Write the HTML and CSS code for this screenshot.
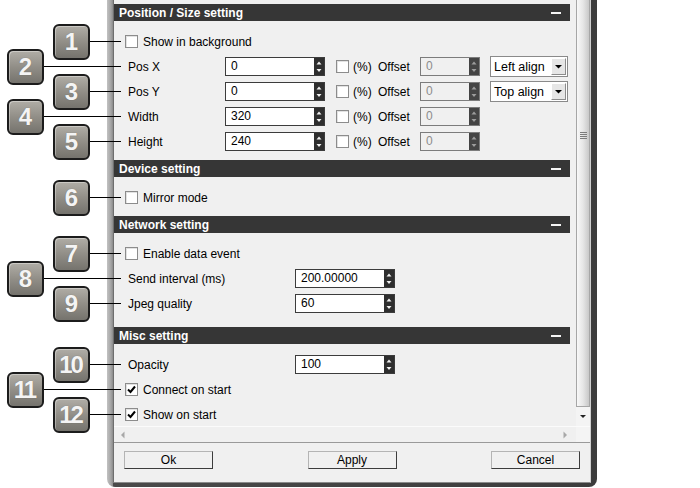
FILE: index.html
```html
<!DOCTYPE html>
<html lang="en">
<head>
  <meta charset="UTF-8">
  <title>Settings</title>
  <link rel="stylesheet" href="styles.css">
</head>
<body>

<div class="window">
  <div class="client">
    <div class="pane">
      <div class="content">

        <div class="section">
          <div class="section-head"><span>Position / Size setting</span><i class="collapse"></i></div>
          <div class="section-body">
            <div class="row">
              <div class="callout near"><b class="badge">1</b><i class="lead"></i></div>
              <span class="box"></span><span class="check-text">Show in background</span>
            </div>
            <div class="row">
              <div class="callout far"><b class="badge">2</b><i class="lead"></i></div>
              <span class="label">Pos X</span>
              <div class="spin"><span class="field">0</span><span class="arrows"><svg width="10" height="17"><path d="M2.5 6.5 L5 3.5 L7.5 6.5 Z M2.5 11 L7.5 11 L5 14 Z"/></svg></span></div>
              <span class="box pct-box"></span><span class="pct">(%)</span><span class="offset-label">Offset</span>
              <div class="spin off"><span class="field">0</span><span class="arrows"><svg width="10" height="17"><path d="M2.5 6.5 L5 3.5 L7.5 6.5 Z M2.5 11 L7.5 11 L5 14 Z"/></svg></span></div>
              <div class="combo"><span class="combo-text">Left align</span><span class="combo-btn"><svg width="13" height="15"><path d="M3 6 L10 6 L6.5 9.5 Z"/></svg></span></div>
            </div>
            <div class="row">
              <div class="callout near"><b class="badge">3</b><i class="lead"></i></div>
              <span class="label">Pos Y</span>
              <div class="spin"><span class="field">0</span><span class="arrows"><svg width="10" height="17"><path d="M2.5 6.5 L5 3.5 L7.5 6.5 Z M2.5 11 L7.5 11 L5 14 Z"/></svg></span></div>
              <span class="box pct-box"></span><span class="pct">(%)</span><span class="offset-label">Offset</span>
              <div class="spin off"><span class="field">0</span><span class="arrows"><svg width="10" height="17"><path d="M2.5 6.5 L5 3.5 L7.5 6.5 Z M2.5 11 L7.5 11 L5 14 Z"/></svg></span></div>
              <div class="combo"><span class="combo-text">Top align</span><span class="combo-btn"><svg width="13" height="15"><path d="M3 6 L10 6 L6.5 9.5 Z"/></svg></span></div>
            </div>
            <div class="row">
              <div class="callout far"><b class="badge">4</b><i class="lead"></i></div>
              <span class="label">Width</span>
              <div class="spin"><span class="field">320</span><span class="arrows"><svg width="10" height="17"><path d="M2.5 6.5 L5 3.5 L7.5 6.5 Z M2.5 11 L7.5 11 L5 14 Z"/></svg></span></div>
              <span class="box pct-box"></span><span class="pct">(%)</span><span class="offset-label">Offset</span>
              <div class="spin off"><span class="field">0</span><span class="arrows"><svg width="10" height="17"><path d="M2.5 6.5 L5 3.5 L7.5 6.5 Z M2.5 11 L7.5 11 L5 14 Z"/></svg></span></div>
            </div>
            <div class="row">
              <div class="callout near"><b class="badge">5</b><i class="lead"></i></div>
              <span class="label">Height</span>
              <div class="spin"><span class="field">240</span><span class="arrows"><svg width="10" height="17"><path d="M2.5 6.5 L5 3.5 L7.5 6.5 Z M2.5 11 L7.5 11 L5 14 Z"/></svg></span></div>
              <span class="box pct-box"></span><span class="pct">(%)</span><span class="offset-label">Offset</span>
              <div class="spin off"><span class="field">0</span><span class="arrows"><svg width="10" height="17"><path d="M2.5 6.5 L5 3.5 L7.5 6.5 Z M2.5 11 L7.5 11 L5 14 Z"/></svg></span></div>
            </div>
          </div>
        </div>

        <div class="section">
          <div class="section-head"><span>Device setting</span><i class="collapse"></i></div>
          <div class="section-body">
            <div class="row">
              <div class="callout near"><b class="badge">6</b><i class="lead"></i></div>
              <span class="box"></span><span class="check-text">Mirror mode</span>
            </div>
          </div>
        </div>

        <div class="section">
          <div class="section-head"><span>Network setting</span><i class="collapse"></i></div>
          <div class="section-body network">
            <div class="row">
              <div class="callout near"><b class="badge">7</b><i class="lead"></i></div>
              <span class="box"></span><span class="check-text">Enable data event</span>
            </div>
            <div class="row">
              <div class="callout far"><b class="badge">8</b><i class="lead"></i></div>
              <span class="label wide">Send interval (ms)</span>
              <div class="spin"><span class="field">200.00000</span><span class="arrows"><svg width="10" height="17"><path d="M2.5 6.5 L5 3.5 L7.5 6.5 Z M2.5 11 L7.5 11 L5 14 Z"/></svg></span></div>
            </div>
            <div class="row">
              <div class="callout near"><b class="badge">9</b><i class="lead"></i></div>
              <span class="label wide">Jpeg quality</span>
              <div class="spin"><span class="field">60</span><span class="arrows"><svg width="10" height="17"><path d="M2.5 6.5 L5 3.5 L7.5 6.5 Z M2.5 11 L7.5 11 L5 14 Z"/></svg></span></div>
            </div>
          </div>
        </div>

        <div class="section">
          <div class="section-head"><span>Misc setting</span><i class="collapse"></i></div>
          <div class="section-body last">
            <div class="row">
              <div class="callout near"><b class="badge two">10</b><i class="lead"></i></div>
              <span class="label wide">Opacity</span>
              <div class="spin"><span class="field">100</span><span class="arrows"><svg width="10" height="17"><path d="M2.5 6.5 L5 3.5 L7.5 6.5 Z M2.5 11 L7.5 11 L5 14 Z"/></svg></span></div>
            </div>
            <div class="row">
              <div class="callout far"><b class="badge two">11</b><i class="lead"></i></div>
              <span class="box"><svg width="11" height="11"><path d="M2 5.5 L4.5 8 L9 2.5"/></svg></span><span class="check-text">Connect on start</span>
            </div>
            <div class="row">
              <div class="callout near"><b class="badge two">12</b><i class="lead"></i></div>
              <span class="box"><svg width="11" height="11"><path d="M2 5.5 L4.5 8 L9 2.5"/></svg></span><span class="check-text">Show on start</span>
            </div>
          </div>
        </div>

      </div>

      <div class="vscroll">
        <div class="thumb">
          <svg class="grip" width="7" height="8"><path d="M0 0.5 H7 M0 2.5 H7 M0 4.5 H7 M0 6.5 H7"/></svg>
        </div>
        <div class="down-arrow"><svg width="14" height="18"><path d="M4 8 L10 8 L7 11 Z"/></svg></div>
      </div>
    </div>

    <div class="hscroll">
      <div class="htrack">
        <svg width="6" height="8"><path d="M4.5 0.5 L4.5 7.5 L1 4 Z"/></svg>
        <svg width="6" height="8"><path d="M1.5 0.5 L1.5 7.5 L5 4 Z"/></svg>
      </div>
      <div class="corner"></div>
    </div>

    <div class="buttons">
      <button class="btn">Ok</button>
      <button class="btn">Apply</button>
      <button class="btn">Cancel</button>
    </div>
  </div>
</div>

</body>
</html>
```

FILE: styles.css
```css
body {
  margin: 0;
  width: 700px;
  height: 488px;
  overflow: hidden;
  background: #fff;
  font-family: "Liberation Sans", Arial, sans-serif;
  font-size: 12px;
  color: #000;
}

/* window frame */
.window {
  margin-left: 107px;
  width: 490px;
  box-sizing: border-box;
  padding: 0 6px 4px 6px;
  border-radius: 0 0 8px 8px;
  background: linear-gradient(to right, #c2c2c2 0, #a4a4a4 4px, #8a8a8a 6px, #4a4a4a 6px, #3c3c3c 100%);
}
.client {
  background: #f0f0f0;
  border-left: 1px solid #6e6e6e;
  border-right: 1px solid #cfcfcf;
  border-bottom: 1px solid #8a8a8a;
}
.pane {
  display: flex;
  height: 426px;
}
.content {
  flex: 1;
  padding-top: 4px;
}

/* sections */
.section-head {
  height: 17px;
  margin-right: 6px;
  padding-left: 5px;
  background: #363636;
  color: #fff;
  font-weight: bold;
  display: flex;
  align-items: center;
  justify-content: space-between;
}
.collapse {
  width: 10px;
  height: 2px;
  background: #f4f4f4;
  margin-right: 9px;
}
.section-body {
  padding: 8px 0 6px;
}
.section-body.network {
  padding-bottom: 11px;
}
.section-body.last {
  padding-bottom: 0;
}

.row {
  position: relative;
  height: 25px;
  padding-left: 11px;
  display: flex;
  align-items: center;
}
.label {
  width: 97px;
  margin-left: 3px;
}
.label.wide {
  width: 167px;
}
.check-text {
  margin-left: 5px;
}

/* checkbox */
.box {
  width: 13px;
  height: 13px;
  box-sizing: border-box;
  border: 1px solid #8c8c8c;
  background: #fff;
  box-shadow: inset 1px 1px 0 #e2e2e2;
  display: flex;
  align-items: center;
  justify-content: center;
}
.box path {
  fill: none;
  stroke: #000;
  stroke-width: 2;
}
.pct-box {
  margin-left: 11px;
}
.pct {
  margin-left: 4px;
  width: 25px;
}
.offset-label {
  width: 42px;
}

/* spin boxes */
.spin {
  display: flex;
  width: 100px;
  height: 19px;
  box-sizing: border-box;
  border: 1px solid #3c3c3c;
  background: #fff;
}
.spin .field {
  flex: 1;
  padding-left: 5px;
  line-height: 17px;
}
.spin .arrows {
  width: 10px;
  background: #2e2e2e;
}
.spin .arrows svg {
  display: block;
}
.spin .arrows path {
  fill: #f2f2f2;
}
.spin.off {
  width: 60px;
  border-color: #7c7c7c;
  background: #f0f0f0;
  color: #8c8c8c;
}
.spin.off .arrows {
  background: #444;
}
.spin.off .arrows path {
  fill: #9c9c9c;
}

/* dropdown */
.combo {
  margin-left: 10px;
  width: 78px;
  height: 21px;
  box-sizing: border-box;
  border: 1px solid #8a8a8a;
  background: #fff;
  display: flex;
  align-items: center;
  justify-content: space-between;
}
.combo-text {
  padding-left: 3px;
  font-size: 12.5px;
}
.combo-btn {
  width: 15px;
  height: 17px;
  margin-right: 1px;
  box-sizing: border-box;
  border: 1px solid;
  border-color: #fff #8c8c8c #8c8c8c #fff;
  background: #e6e6e6;
}
.combo-btn svg {
  display: block;
}
.combo-btn path {
  fill: #000;
}

/* numbered callouts */
.callout {
  position: absolute;
  top: 50%;
  transform: translateY(-50%);
  display: flex;
  align-items: center;
}
.callout.near {
  left: -61px;
}
.callout.far {
  left: -107px;
}
.badge {
  width: 37px;
  height: 36px;
  box-sizing: border-box;
  border: 2px solid #1c1c1c;
  border-radius: 6px;
  background: linear-gradient(#b0ada6, #918e87 50%, #75736d);
  box-shadow: inset 1px 1px 0 rgba(255, 255, 255, 0.35);
  color: #f4f4f4;
  font-size: 24px;
  font-weight: bold;
  display: flex;
  align-items: center;
  justify-content: center;
  text-shadow: 0 0 1px rgba(0, 0, 0, 0.3);
}
.badge.two {
  letter-spacing: -2px;
  padding-right: 2px;
}
.lead {
  height: 1px;
  background: #000;
}
.near .lead {
  width: 31px;
}
.far .lead {
  width: 77px;
}

/* scrollbars */
.vscroll {
  width: 14px;
  display: flex;
  flex-direction: column;
  background: #f4f4f4;
}
.thumb {
  flex: 1;
  box-sizing: border-box;
  border: 1px solid #a6a6a6;
  border-top: none;
  background: linear-gradient(to right, #f8f8f8, #e6e6e6 50%, #c8c8c8);
}
.grip {
  display: block;
  margin: 132px 0 0 3px;
}
.grip path {
  stroke: #7c7c7c;
  stroke-width: 1;
}
.down-arrow {
  height: 19px;
  background: #f4f4f4;
}
.down-arrow svg {
  display: block;
}
.down-arrow path {
  fill: #222;
}
.hscroll {
  height: 16px;
  display: flex;
  box-sizing: border-box;
  border-top: 1px solid #fbfbfb;
  background: #f0f0f0;
}
.htrack {
  flex: 1;
  display: flex;
  align-items: center;
  justify-content: space-between;
  padding: 0 8px 0 6px;
}
.htrack path {
  fill: #a8a8a8;
}
.corner {
  width: 14px;
  background: #f4f4f4;
}

/* bottom buttons */
.buttons {
  height: 40px;
  box-sizing: border-box;
  border-top: 1px solid #9a9a9a;
  padding: 8px 10px 0;
  display: flex;
  justify-content: space-between;
  align-items: flex-start;
}
.btn {
  width: 89px;
  height: 18px;
  box-sizing: border-box;
  padding: 0;
  border: 1px solid;
  border-color: #b4b4b4 #3c3c3c #3c3c3c #b4b4b4;
  background: #f0f0f0;
  font-family: inherit;
  font-size: 12px;
  color: #000;
  line-height: 16px;
}
```
